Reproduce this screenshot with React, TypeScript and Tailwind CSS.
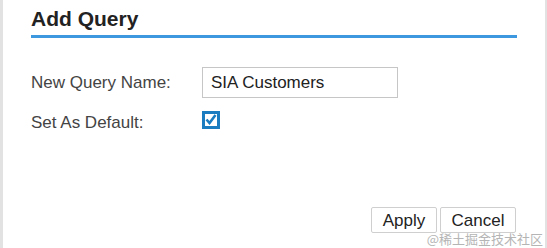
const App = () => {
  return (
    <div className="relative w-[547px] h-[248px] bg-white border-l-[3px] border-r-[2px] border-[#e2e2e2] font-['Liberation_Sans',Arial,sans-serif] overflow-hidden">
      <div className="pl-[28px] pr-[28px] pt-[7px]">
        {/* title */}
        <h2 className="text-[21px] leading-[24px] font-bold text-[#222]">Add Query</h2>
        <div className="mt-[4px] h-[3px] bg-[#3d98e0]" />

        {/* form */}
        <div className="mt-[29px] flex items-center">
          <label className="w-[171px] text-[17px] text-[#444]">New Query Name:</label>
          <input
            defaultValue="SIA Customers"
            className="w-[196px] h-[31px] border border-[#c6c6c6] px-[8px] text-[17px] text-[#222] outline-none"
          />
        </div>
        <div className="mt-[13px] flex items-center h-[24px]">
          <label className="w-[171px] text-[17px] text-[#444]">Set As Default:</label>
          <div className="w-[18px] h-[18px] border-[3px] border-[#1b7cc0] flex items-center justify-center -mt-[7px]">
            <svg width="12" height="11" viewBox="0 0 12 11">
              <path d="M1.5 5.5 L4.5 9 L10.5 1" fill="none" stroke="#1b7cc0" strokeWidth="2.6" />
            </svg>
          </div>
        </div>

        {/* actions */}
        <div className="mt-[72px] flex justify-end gap-[3px] pr-[1px]">
          <button className="w-[66px] h-[26px] border border-[#cfcfcf] rounded-[2px] bg-white text-[17px] text-[#222]">
            Apply
          </button>
          <button className="w-[76px] h-[26px] border border-[#cfcfcf] rounded-[2px] bg-white text-[17px] text-[#222]">
            Cancel
          </button>
        </div>
      </div>

      {/* watermark */}
      <span className="absolute right-[2px] bottom-[3px] text-[13px] leading-none text-[#b5b5b5] font-['Noto_Sans_CJK_SC',sans-serif]">
        @稀土掘金技术社区
      </span>
    </div>
  );
};

export default App;
